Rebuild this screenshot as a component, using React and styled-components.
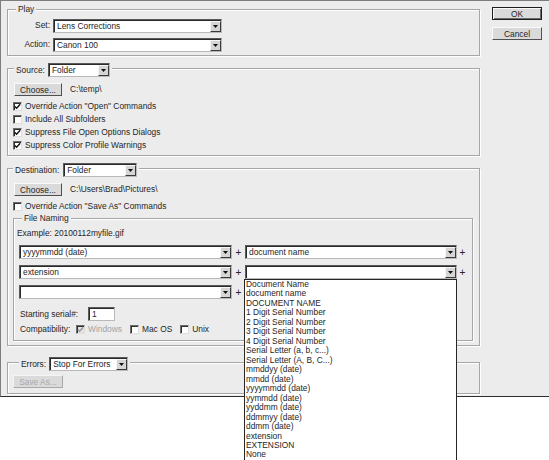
import React from "react";
import styled, { createGlobalStyle } from "styled-components";

const GlobalStyle = createGlobalStyle`
  html, body, #root {
    margin: 0;
    padding: 0;
    background: #fff;
    min-height: 460px;
  }
  body {
    font-family: "Liberation Sans", Arial, sans-serif;
    font-size: 8.4px;
    line-height: 11px;
    color: #262626;
  }
  * {
    box-sizing: border-box;
  }
`;

const Dialog = styled.div`
  display: flex;
  align-items: flex-start;
  width: 549px;
  height: 397px;
  padding: 3px 0 0 6px;
  background: #ececec;
  border-top: 1px solid #7d7d7d;
  border-left: 1px solid #7d7d7d;
  border-bottom: 1px solid #2e2e2e;
  overflow: visible;
`;

const MainColumn = styled.div`
  display: flex;
  flex-direction: column;
  width: 473px;
  flex: none;
`;

const SideColumn = styled.div`
  display: flex;
  flex-direction: column;
  gap: 7px;
  margin: 3px 0 0 12px;
`;

const Group = styled.fieldset`
  display: flex;
  flex-direction: column;
  min-width: 0;
  margin: ${(p) => p.$mt || 0}px 0 0 0;
  padding: ${(p) => p.$pad};
  border: 1px solid #a6a6a6;
  box-shadow: inset 1px 1px 0 #fff, 1px 1px 0 #fff;
  overflow: visible;
`;

const Legend = styled.legend`
  display: flex;
  align-items: center;
  margin-left: ${(p) => p.$indent || 0}px;
  padding: ${(p) => p.$ptop || 0}px 2px 0;
  line-height: 11px;
  background: #ececec;
`;

const FieldRow = styled.div`
  display: flex;
  align-items: center;
  gap: ${(p) => p.$gap || 3}px;
  margin-top: ${(p) => p.$mt || 0}px;
  margin-left: ${(p) => p.$ml || 0}px;
  height: ${(p) => p.$h || 14}px;
`;

const Label = styled.span`
  width: ${(p) => (p.$w ? `${p.$w}px` : "auto")};
  text-align: ${(p) => p.$align || "left"};
  white-space: nowrap;
  flex: none;
`;

const SelectBox = styled.div`
  position: relative;
  display: flex;
  align-items: stretch;
  flex: none;
  width: ${(p) => p.$w}px;
  height: 14px;
  background: #fff;
  border: 1px solid;
  border-color: #5a5a5a #b9b9b9 #b9b9b9 #5a5a5a;
  box-shadow: inset 1px 1px 0 #2a2a2a;
`;

const SelectValue = styled.span`
  flex: 1;
  padding: 1px 0 0 3px;
  line-height: 11px;
  white-space: nowrap;
  overflow: hidden;
`;

const ArrowButton = styled.span`
  display: flex;
  align-items: center;
  justify-content: center;
  width: 11px;
  margin: 1px 0 0 0;
  background: #d5d5d5;
  border: 1px solid;
  border-color: #f6f6f6 #3a3a3a #3a3a3a #f6f6f6;
`;

const PushButton = styled.button`
  width: ${(p) => p.$w}px;
  height: 13px;
  padding: 0;
  flex: none;
  font: inherit;
  line-height: 10px;
  color: ${(p) => (p.disabled ? "#a8a8a8" : "#262626")};
  background: #dadada;
  border: 1px solid;
  border-color: ${(p) =>
    p.$primary
      ? "#1e1e1e"
      : p.disabled
      ? "#f4f4f4 #a9a9a9 #a9a9a9 #f4f4f4"
      : "#fafafa #505050 #505050 #fafafa"};
  box-shadow: ${(p) =>
    p.$primary ? "inset 1px 1px 0 #fafafa, inset -1px -1px 0 #6a6a6a" : "none"};
`;

const PathText = styled.span`
  margin-left: 5px;
  white-space: nowrap;
`;

const CheckRow = styled.label`
  display: flex;
  align-items: center;
  gap: 3px;
  height: 13px;
  margin-left: ${(p) => p.$ml || 0}px;
  margin-right: ${(p) => p.$mr || 0}px;
  color: ${(p) => (p.$disabled ? "#a3a3a3" : "inherit")};
  white-space: nowrap;
`;

const CheckBox = styled.span`
  display: flex;
  align-items: center;
  justify-content: center;
  width: 9px;
  height: 9px;
  flex: none;
  background: ${(p) => (p.$disabled ? "#e2e2e2" : "#fff")};
  border: 1px solid;
  border-color: #6c6c6c #dedede #dedede #6c6c6c;
  box-shadow: inset 1px 1px 0 #303030;
`;

const ExampleText = styled.div`
  height: 11px;
  margin: 0 0 0 -2px;
  white-space: nowrap;
`;

const NamingRow = styled.div`
  display: flex;
  align-items: center;
  height: 14px;
  margin-top: ${(p) => p.$mt}px;
`;

const Plus = styled.span`
  width: ${(p) => p.$w || 13}px;
  text-align: center;
  font-size: 10px;
  flex: none;
`;

const TextInput = styled.div`
  width: ${(p) => p.$w}px;
  height: 14px;
  padding: 1px 0 0 3px;
  background: #fff;
  border: 1px solid;
  border-color: #5a5a5a #b9b9b9 #b9b9b9 #5a5a5a;
  box-shadow: inset 1px 1px 0 #2a2a2a;
  line-height: 11px;
`;

const DropList = styled.ul`
  position: absolute;
  z-index: 10;
  top: calc(100% + 1px);
  left: -2px;
  width: 213px;
  margin: 0;
  padding: 0;
  list-style: none;
  background: #fff;
  border: 1px solid #262626;
`;

const DropItem = styled.li`
  height: 9.47px;
  padding-left: 1px;
  line-height: 9.47px;
  white-space: nowrap;
`;

const Arrow = () => (
  <svg width="5" height="3" viewBox="0 0 5 3">
    <path d="M0 0h5L2.5 3z" fill="#111" />
  </svg>
);

const Select = ({ width, value, children }) => (
  <SelectBox $w={width}>
    <SelectValue>{value}</SelectValue>
    <ArrowButton>
      <Arrow />
    </ArrowButton>
    {children}
  </SelectBox>
);

const Check = ({ checked, disabled, label, ml, mr }) => (
  <CheckRow $ml={ml} $mr={mr} $disabled={disabled}>
    <CheckBox $disabled={disabled}>
      {checked && (
        <svg width="7" height="7" viewBox="0 0 7 7">
          <path
            d="M0.8 3.4 L2.6 5.2 L6.2 1.2"
            fill="none"
            stroke={disabled ? "#9a9a9a" : "#111"}
            strokeWidth="1.4"
          />
        </svg>
      )}
    </CheckBox>
    {label}
  </CheckRow>
);

const namingOptions = [
  "Document Name",
  "document name",
  "DOCUMENT NAME",
  "1 Digit Serial Number",
  "2 Digit Serial Number",
  "3 Digit Serial Number",
  "4 Digit Serial Number",
  "Serial Letter (a, b, c...)",
  "Serial Letter (A, B, C...)",
  "mmddyy (date)",
  "mmdd (date)",
  "yyyymmdd (date)",
  "yymmdd (date)",
  "yyddmm (date)",
  "ddmmyy (date)",
  "ddmm (date)",
  "extension",
  "EXTENSION",
  "None",
];

export default function App() {
  return (
    <>
      <GlobalStyle />
      <Dialog>
        <MainColumn>
          <Group $pad="3px 6px 3px 6px">
            <Legend $indent={2}>Play</Legend>
            <FieldRow $h={15}>
              <Label $w={36} $align="right">Set:</Label>
              <Select width={169} value="Lens Corrections" />
            </FieldRow>
            <FieldRow $h={15} $mt={4}>
              <Label $w={36} $align="right">Action:</Label>
              <Select width={169} value="Canon 100" />
            </FieldRow>
          </Group>

          <Group $mt={4} $pad="6px 6px 3px 6px">
            <Legend $ptop={3}>
              <Label>Source:</Label>
              <FieldRow $gap={0} $ml={3}>
                <Select width={62} value="Folder" />
              </FieldRow>
            </Legend>
            <FieldRow $h={13}>
              <PushButton $w={48}>Choose...</PushButton>
              <PathText>C:\temp\</PathText>
            </FieldRow>
            <FieldRow $h={4} />
            <Check ml={-1} checked label={'Override Action "Open" Commands'} />
            <Check ml={-1} label="Include All Subfolders" />
            <Check ml={-1} checked label="Suppress File Open Options Dialogs" />
            <Check ml={-1} checked label="Suppress Color Profile Warnings" />
          </Group>

          <Group $mt={4} $pad="6px 6px 4px 5px">
            <Legend $ptop={3}>
              <Label>Destination:</Label>
              <FieldRow $gap={0} $ml={4}>
                <Select width={74} value="Folder" />
              </FieldRow>
            </Legend>
            <FieldRow $h={13} $ml={1}>
              <PushButton $w={48}>Choose...</PushButton>
              <PathText>C:\Users\Brad\Pictures\</PathText>
            </FieldRow>
            <FieldRow $h={13} $mt={4}>
              <Check label={'Override Action "Save As" Commands'} />
            </FieldRow>

            <Group $pad="4px 3px 5px 5px">
              <Legend $indent={3}>File Naming</Legend>
              <ExampleText>Example: 20100112myfile.gif</ExampleText>
              <NamingRow $mt={6}>
                <Select width={213} value="yyyymmdd (date)" />
                <Plus>+</Plus>
                <Select width={212} value="document name" />
                <Plus $w={11}>+</Plus>
              </NamingRow>
              <NamingRow $mt={6}>
                <Select width={213} value="extension" />
                <Plus>+</Plus>
                <Select width={212} value="">
                  <DropList>
                    {namingOptions.map((o) => (
                      <DropItem key={o}>{o}</DropItem>
                    ))}
                  </DropList>
                </Select>
                <Plus $w={11}>+</Plus>
              </NamingRow>
              <NamingRow $mt={6}>
                <Select width={213} value="" />
                <Plus>+</Plus>
                <Select width={212} value="" />
              </NamingRow>
              <FieldRow $mt={8} $ml={1} $gap={0}>
                <Label $w={65}>Starting serial#:</Label>
                <TextInput $w={27}>1</TextInput>
              </FieldRow>
              <FieldRow $mt={2} $ml={1} $h={12} $gap={0}>
                <Label $w={53}>Compatibility:</Label>
                <Check checked disabled label="Windows" mr={5} />
                <Check label="Mac OS" mr={5} />
                <Check label="Unix" />
              </FieldRow>
            </Group>
          </Group>

          <Group $mt={8} $pad="4px 6px 5px 6px">
            <Legend $indent={5} $ptop={3}>
              <Label>Errors:</Label>
              <FieldRow $gap={0} $ml={3}>
                <Select width={79} value="Stop For Errors" />
              </FieldRow>
            </Legend>
            <FieldRow $h={13} $ml={-1}>
              <PushButton $w={50} disabled>
                Save As...
              </PushButton>
            </FieldRow>
          </Group>
        </MainColumn>

        <SideColumn>
          <PushButton $w={50} $primary>
            OK
          </PushButton>
          <PushButton $w={50}>Cancel</PushButton>
        </SideColumn>
      </Dialog>
    </>
  );
}
